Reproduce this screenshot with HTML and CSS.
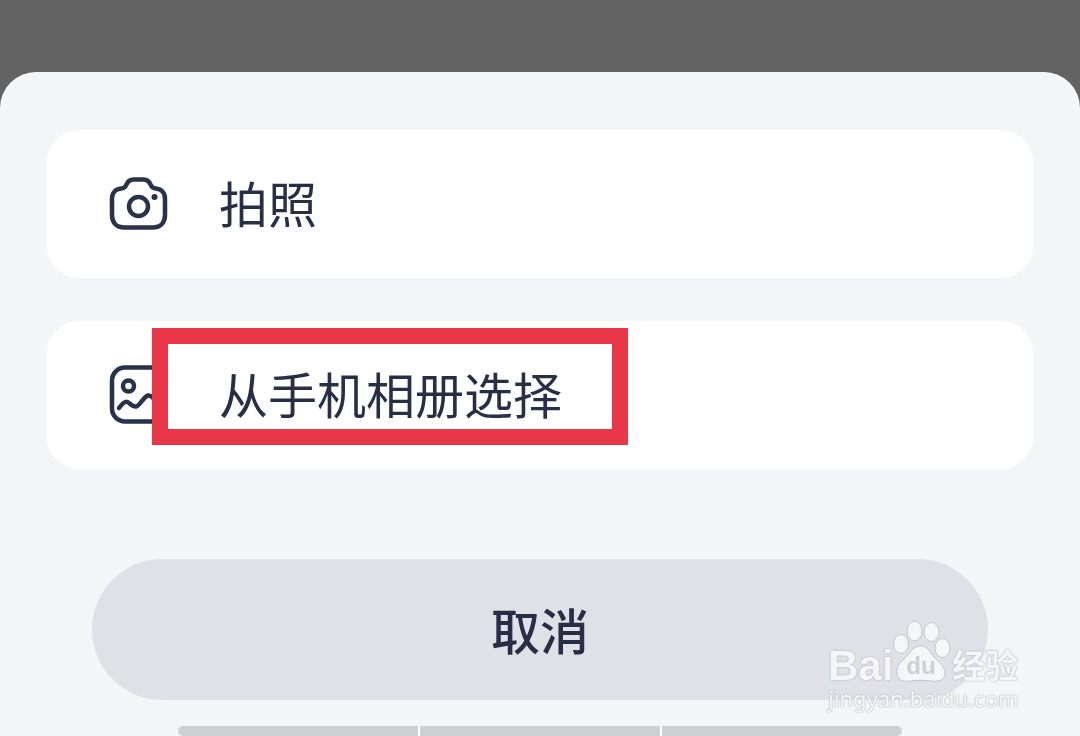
FILE: index.html
```
<!DOCTYPE html>
<html lang="zh-CN">
<head>
  <meta charset="UTF-8" />
  <title>选择图片</title>
  <meta name="viewport" content="width=device-width, initial-scale=1.0" />
  <link rel="stylesheet" href="styles.css">
</head>
<body>
  <div class="sheet">
    <div class="options">
      <button type="button" class="option">
        <svg class="icon" viewBox="0 0 60 60" aria-hidden="true">
          <path d="M12 14.500C15.500 14.500 16.500 13 17.500 10.500C19 7 21 5.500 24.500 5.500H34.500C38 5.500 40 7 41.500 10.500C42.500 13 43.500 14.500 47 14.500C52.500 15 56 19 56 24.500V41C56 49 51 53.500 44 53.500H15C8 53.500 3 49 3 41V24.500C3 19 6.500 15 12 14.500Z" />
          <circle cx="29.500" cy="32.500" r="9.500" />
          <circle class="dot" cx="45.500" cy="23" r="3" />
        </svg>
        <span class="label">拍照</span>
      </button>
      <button type="button" class="option">
        <svg class="icon" viewBox="0 0 60 60" aria-hidden="true">
          <rect x="3" y="2.500" width="52" height="54" rx="13" />
          <circle cx="19.500" cy="21" r="5.500" />
          <path d="M10 43C13 39 16 36 18.500 37C21.500 38.500 23 42 27 41.500C31 41 34 32 39 30.500C43 29.500 47 37 54 43" />
        </svg>
        <span class="label">从手机相册选择</span>
        <span class="highlight"></span>
      </button>
    </div>
    <button type="button" class="cancel">取消</button>
    <div class="nav-bar"><i></i><i></i><i></i></div>
    <div class="watermark">
      <div class="brand">
        <span class="brand-name">Bai</span>
        <svg class="paw" viewBox="0 0 60 64" aria-hidden="true">
          <ellipse cx="9" cy="24" rx="7.500" ry="9.500" />
          <ellipse cx="22.500" cy="11" rx="7.500" ry="10" />
          <ellipse cx="39.500" cy="12" rx="7.500" ry="9.500" />
          <ellipse cx="50.500" cy="28" rx="7.500" ry="9.500" />
          <path d="M29 26C21 26 18 33 13 38C7 43 4 48 5 54C6 61 12 62 19 61C26 60 32 60 39 61C47 62 53 60 53 53C53 46 46 42 42 37C38 32 36 26 29 26Z" />
          <text x="29" y="54" text-anchor="middle">du</text>
        </svg>
        <span class="brand-cn">经验</span>
      </div>
      <div class="site">jingyan.baidu.com</div>
    </div>
  </div>
</body>
</html>
```

FILE: styles.css
```
:root {
  --backdrop: #626262;
  --sheet-bg: #f4f5f7;
  --card-bg: #ffffff;
  --text-color: #272e45;
  --icon-color: #283349;
  --mark: #e93649;
}

* {
  box-sizing: border-box;
}

body {
  margin: 0;
  min-height: 100vh;
  padding-top: 72px;
  display: flex;
  background-color: var(--backdrop);
  color: var(--text-color);
  font-family: "Noto Sans CJK SC", sans-serif;
}

button {
  border: none;
  color: inherit;
  font-family: inherit;
  font-size: 49px;
  cursor: pointer;
}

.sheet {
  position: relative;
  flex: 1;
  display: flex;
  flex-direction: column;
  padding: 58px 46px 0;
  background-color: var(--sheet-bg);
  border-radius: 36px 36px 0 0;
}

.options {
  display: flex;
  flex-direction: column;
  gap: 43px;
}

.option {
  position: relative;
  display: flex;
  align-items: center;
  gap: 50px;
  height: 148px;
  padding: 0 63px;
  background-color: var(--card-bg);
  border-radius: 34px;
  font-weight: 400;
  text-align: left;
}

.label {
  padding-bottom: 6px;
}

.icon {
  width: 60px;
  height: 60px;
  fill: none;
  stroke: var(--icon-color);
  stroke-width: 4.5;
  stroke-linecap: round;
}

.icon .dot {
  fill: var(--icon-color);
  stroke: none;
}

/* red frame round the recommended option */
.highlight {
  position: absolute;
  top: 7px;
  left: 106px;
  width: 476px;
  height: 117px;
  border: 16px solid var(--mark);
}

.cancel {
  height: 141px;
  margin: 90px 46px 0;
  padding: 0 0 2px;
  background-color: #dfe1e6;
  border-radius: 71px;
  font-weight: 500;
}

.nav-bar {
  display: flex;
  gap: 2px;
  width: 724px;
  max-width: 100%;
  height: 10px;
  margin: 26px auto 0;
  background-color: #ffffff;
  border-radius: 5px;
  overflow: hidden;
}

.nav-bar i {
  flex: 1;
  background-color: #cfd0d2;
}

.watermark {
  position: absolute;
  right: 58px;
  bottom: 24px;
  width: 194px;
  color: #f5f6f8;
  text-shadow: 0 0 2px #b4b5b8, 0 0 1px #b4b5b8;
  pointer-events: none;
}

.brand {
  display: flex;
  align-items: flex-end;
  height: 64px;
}

.brand-name {
  width: 64px;
  font: bold 42px/36px "Liberation Sans", sans-serif;
}

.paw {
  flex: none;
  width: 60px;
  height: 64px;
  overflow: visible;
  fill: #f5f6f8;
  stroke: #c4c5c9;
  stroke-width: 1;
}

.paw text {
  fill: #cfd0d4;
  stroke: none;
  font: bold 24px "Liberation Sans", sans-serif;
  text-shadow: none;
}

.brand-cn {
  font-size: 33px;
  font-weight: 700;
  line-height: 40px;
  white-space: nowrap;
}

.site {
  font: 22px/28px "Noto Sans", sans-serif;
  white-space: nowrap;
}
```
